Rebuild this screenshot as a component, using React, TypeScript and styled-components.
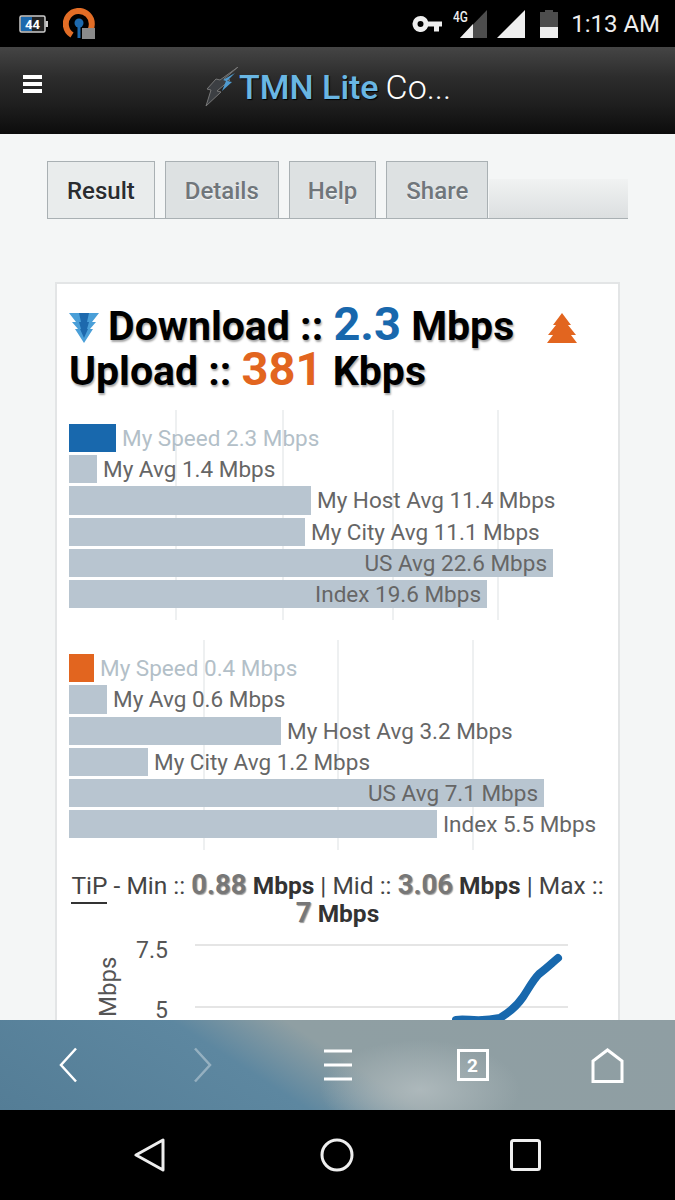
import styled, { createGlobalStyle } from 'styled-components'

const downloadRows = [
  { label: 'My Speed 2.3 Mbps', width: 47, speed: true },
  { label: 'My Avg 1.4 Mbps', width: 28 },
  { label: 'My Host Avg 11.4 Mbps', width: 242 },
  { label: 'My City Avg 11.1 Mbps', width: 236 },
  { label: 'US Avg 22.6 Mbps', width: 484, inside: true },
  { label: 'Index 19.6 Mbps', width: 418, inside: true },
]

const uploadRows = [
  { label: 'My Speed 0.4 Mbps', width: 25, speed: true },
  { label: 'My Avg 0.6 Mbps', width: 38 },
  { label: 'My Host Avg 3.2 Mbps', width: 212 },
  { label: 'My City Avg 1.2 Mbps', width: 79 },
  { label: 'US Avg 7.1 Mbps', width: 475, inside: true },
  { label: 'Index 5.5 Mbps', width: 368 },
]

type Row = { label: string; width: number; speed?: boolean; inside?: boolean }

const App = () => (
  <Screen>
    <GlobalStyle />
    <StatusBar>
      <StatusGroup>
        <svg width="30" height="20" viewBox="0 0 30 20">
          <rect x="1" y="2" width="25" height="16" rx="1.5" fill="#222" stroke="#ccc" strokeWidth="1.5" />
          <rect x="2" y="3" width="11" height="14" fill="#1d69ad" />
          <rect x="26.5" y="7" width="2.5" height="6" fill="#ccc" />
          <text x="13.5" y="15" fontFamily="Roboto" fontSize="13" fontWeight="700" fill="#fff" textAnchor="middle">44</text>
        </svg>
        <svg width="32" height="32" viewBox="0 0 32 32">
          <path d="M9 27 A13 13 0 1 1 24 26" fill="none" stroke="#e26d26" strokeWidth="6" />
          <circle cx="16" cy="15" r="4.5" fill="#1d69ad" />
          <path d="M14.5 17h3v13h-3z" fill="#1d69ad" />
          <rect x="19" y="20" width="13" height="11" fill="#8a8a8a" />
        </svg>
      </StatusGroup>
      <StatusRight>
        <KeyIcon width="30" height="18" viewBox="0 0 30 18">
          <path d="M8.5 1a8 8 0 0 1 7.6 5.5H30v5h-3v5h-5v-5h-5.900A8 8 0 1 1 8.500 1zm0 5a3 3 0 1 0 0 6 3 3 0 0 0 0-6z" fill="#eee" fillRule="evenodd" />
        </KeyIcon>
        <NetworkIcon>
          <NetworkLabel>4G</NetworkLabel>
          <svg width="28" height="28" viewBox="0 0 28 28">
            <path d="M27 0v28H0z" fill="#4d4d4d" />
            <path d="M13 14v14H0z" fill="#eee" />
          </svg>
        </NetworkIcon>
        <svg width="28" height="28" viewBox="0 0 28 28">
          <path d="M28 0v28H0z" fill="#eee" />
        </svg>
        <BatteryIcon width="18" height="28" viewBox="0 0 18 28">
          <path d="M5 0h8v2h5v26H0V2h5z" fill="#4d4d4d" />
          <path d="M0 17h18v11H0z" fill="#eee" />
        </BatteryIcon>
        <Clock>1:13 AM</Clock>
      </StatusRight>
    </StatusBar>

    <Header>
      <HeaderMenu>
        <svg width="19" height="18" viewBox="0 0 19 18">
          <path d="M0 0h19v4H0zM0 7h19v4H0zM0 14h19v4H0z" fill="#fff" />
        </svg>
      </HeaderMenu>
      <Brand>
        <svg width="34" height="40" viewBox="0 0 34 40">
          <path d="M33 0 L19 12 L25 13 L12 24 L16 25 L1 39 L6 23 L2 22 L11 12 L15 13z" fill="#3c3f43" stroke="#777" strokeWidth="1" />
          <path d="M30 6 L22 14 L27 15 L17 24 L21 14 L18 13z" fill="#4f9bd0" />
        </svg>
        <BrandName>TMN Lite</BrandName>
        <BrandRest>Co...</BrandRest>
      </Brand>
    </Header>

    <Content>
      <TabStrip>
        <Tab $active>Result</Tab>
        <Tab>Details</Tab>
        <Tab $pad={18}>Help</Tab>
        <Tab>Share</Tab>
      </TabStrip>

      <Card>
        <Heading>
          <HeadingIcon width="30" height="30" viewBox="0 0 30 30" $right={9}>
            <path d="M0 0h30l-7 9h4l-6 7h3L15 30 6 16h3L3 9h4z" fill="#4a9fd8" />
            <path d="M10 0h10l-2 9h2l-2 7h1l-4 9-4-9h1L10 9h2z" fill="#1d69ad" />
          </HeadingIcon>
          Download :: <DownloadValue>2.3</DownloadValue> Mbps
          <HeadingIcon width="30" height="30" viewBox="0 0 30 30" $left={33}>
            <path d="M15 0l9 12h-3l8 10h-5l6 8H0l6-8H1l8-10H6z" fill="#e2651f" />
          </HeadingIcon>
          <br />
          Upload :: <UploadValue>381</UploadValue> Kbps
        </Heading>

        <Chart $lines={[106, 213, 323, 428]} $top={16}>
          {downloadRows.map((row) => <ChartRow key={row.label} row={row} color="#1868ad" />)}
        </Chart>

        <Chart $lines={[134, 268, 403]} $top={20}>
          {uploadRows.map((row) => <ChartRow key={row.label} row={row} color="#e2651f" />)}
        </Chart>

        <TipLine>
          <TipName>TiP</TipName> - Min :: <TipValue>0.88</TipValue> <TipUnit>Mbps</TipUnit> | Mid :: <TipValue>3.06</TipValue> <TipUnit>Mbps</TipUnit> | Max :: <TipValue>7</TipValue> <TipUnit>Mbps</TipUnit>
        </TipLine>

        <LineChart width="563" height="110" viewBox="0 0 563 110">
          <line x1="138" y1="15" x2="511" y2="15" stroke="#ddd" strokeWidth="1.5" />
          <line x1="138" y1="77" x2="511" y2="77" stroke="#ddd" strokeWidth="1.5" />
          <text x="79" y="28" fontFamily="Roboto" fontSize="23" fill="#555">7.5</text>
          <text x="98" y="88" fontFamily="Roboto" fontSize="23" fill="#555">5</text>
          <text transform="translate(59 87) rotate(-90)" fontFamily="Roboto" fontSize="24" fill="#555">Mbps</text>
          <path d="M399 90 C410 88 420 93 443 88 C453 82 460 76 466 67 C472 58 476 50 482 44 C490 38 495 33 501 28" fill="none" stroke="#1868ad" strokeWidth="8" strokeLinecap="round" />
        </LineChart>
      </Card>
    </Content>

    <BrowserBar>
      <svg width="20" height="36" viewBox="0 0 20 36">
        <path d="M18 1.500 3 18l15 16.500" fill="none" stroke="#fff" strokeWidth="2.500" />
      </svg>
      <DimIcon width="20" height="36" viewBox="0 0 20 36">
        <path d="M2 1.500 17 18 2 34.500" fill="none" stroke="#fff" strokeWidth="2.500" />
      </DimIcon>
      <svg width="28" height="34" viewBox="0 0 28 34">
        <path d="M0 3h28M0 17h28M0 31h28" fill="none" stroke="#fff" strokeWidth="3" />
      </svg>
      <PageCount>2</PageCount>
      <svg width="33" height="35" viewBox="0 0 33 35">
        <path d="M2 33.500V13L16.500 2 31 13v20.500z" fill="none" stroke="#fff" strokeWidth="3" />
      </svg>
    </BrowserBar>

    <NavBar>
      <svg width="31" height="34" viewBox="0 0 31 34">
        <path d="M29 2v30L2 17z" fill="none" stroke="#eee" strokeWidth="3" strokeLinejoin="round" />
      </svg>
      <svg width="34" height="34" viewBox="0 0 34 34">
        <circle cx="17" cy="17" r="15" fill="none" stroke="#eee" strokeWidth="3" />
      </svg>
      <svg width="31" height="32" viewBox="0 0 31 32">
        <rect x="1.500" y="1.500" width="28" height="29" rx="2" fill="none" stroke="#eee" strokeWidth="3" />
      </svg>
    </NavBar>
  </Screen>
)

const ChartRow = ({ row, color }: { row: Row; color: string }) => (
  <RowLine>
    <Bar style={{ width: row.width }} $color={row.speed ? color : '#b8c5d0'}>
      {row.inside && <BarLabel>{row.label}</BarLabel>}
    </Bar>
    {!row.inside && <BarLabel $speed={row.speed}>{row.label}</BarLabel>}
  </RowLine>
)

const GlobalStyle = createGlobalStyle`
  html, body {
    margin: 0;
    padding: 0;
    background: #000;
  }
  body {
    font-family: Roboto, "Liberation Sans", sans-serif;
  }
`

const Screen = styled.div`
  width: 675px;
  height: 1200px;
  display: flex;
  flex-direction: column;
  overflow: hidden;
`

const StatusBar = styled.div`
  height: 47px;
  flex: none;
  background: #000;
  display: flex;
  align-items: center;
  justify-content: space-between;
  padding: 0 15px 0 19px;
`

const StatusGroup = styled.div`
  display: flex;
  align-items: center;
  gap: 14px;
`

const StatusRight = styled(StatusGroup)`
  gap: 9px;
`

const KeyIcon = styled.svg`
  margin-right: 0;
`

const BatteryIcon = styled.svg`
  margin-left: 6px;
`

const NetworkIcon = styled.div`
  position: relative;
  display: flex;
  padding-left: 9px;
`

const NetworkLabel = styled.span`
  position: absolute;
  left: 2px;
  top: -1px;
  font-size: 14px;
  font-weight: 500;
  color: #eee;
  transform: scaleX(0.85);
  transform-origin: left;
`

const Clock = styled.span`
  font-size: 24px;
  color: #eee;
  margin-left: 4px;
`

const Header = styled.header`
  height: 87px;
  flex: none;
  display: flex;
  align-items: center;
  background: linear-gradient(#454545, #2c2c2c 35%, #1f1f1f 65%, #0c0c0c);
  padding: 0 0 8px 23px;
  box-sizing: border-box;
`

const HeaderMenu = styled.div`
  display: flex;
  margin-top: -6px;
`

const Brand = styled.div`
  display: flex;
  align-items: center;
  margin-left: 163px;
`

const BrandName = styled.span`
  font-size: 34px;
  font-weight: 500;
  color: #69b6e3;
  text-shadow: 1px 1px 1px #000;
`

const BrandRest = styled.span`
  font-size: 34px;
  font-weight: 300;
  color: #fff;
  margin-left: 7px;
`

const Content = styled.main`
  flex: 1;
  min-height: 0;
  background: #f4f6f6;
  padding: 27px 47px 0;
  overflow: hidden;
`

const TabStrip = styled.nav`
  display: flex;
  gap: 10px;
  height: 58px;
  width: 581px;
  box-sizing: border-box;
  border-bottom: 1px solid #a9b0b3;
  background: linear-gradient(#f0f2f2, #dcdfe0) no-repeat right bottom / 139px 39px;
`

const Tab = styled.div<{ $active?: boolean; $pad?: number }>`
  display: flex;
  align-items: center;
  justify-content: center;
  padding: 2px ${(props) => props.$pad || 19}px 0;
  border: 1px solid #a9b0b3;
  border-bottom: none;
  background: ${(props) => (props.$active ? '#e9ecec' : '#dde1e2')};
  color: ${(props) => (props.$active ? '#2a2d30' : '#70767b')};
  font-size: 24px;
  font-weight: 500;
  text-shadow: 0 1px 1px rgba(255, 255, 255, 0.8);
`

const Card = styled.section`
  margin: 63px 0 0 8px;
  width: 565px;
  height: 780px;
  box-sizing: border-box;
  background: #fff;
  border: 2px solid #e3e5e6;
  padding: 20px 12px 0;
`

const Heading = styled.h1`
  margin: 0;
  font-size: 41px;
  line-height: 45px;
  font-weight: 700;
  color: #000;
  white-space: nowrap;
  text-shadow: 1px 2px 2px rgba(0, 0, 0, 0.35);
`

const HeadingIcon = styled.svg<{ $left?: number; $right?: number }>`
  vertical-align: -3px;
  margin-left: ${(props) => props.$left || 0}px;
  margin-right: ${(props) => props.$right || 0}px;
`

const DownloadValue = styled.span`
  font-size: 47px;
  line-height: 0;
  color: #1868ad;
  text-shadow: none;
`

const UploadValue = styled.span`
  font-size: 47px;
  line-height: 0;
  color: #e2651f;
  text-shadow: none;
`

const Chart = styled.div<{ $lines: number[]; $top: number }>`
  margin-top: ${(props) => props.$top}px;
  padding: 14px 0 12px;
  display: flex;
  flex-direction: column;
  gap: 3px;
  background-image: ${(props) => props.$lines.map(() => 'linear-gradient(#eef0f1, #eef0f1)').join(', ')};
  background-size: 2px 100%;
  background-repeat: no-repeat;
  background-position: ${(props) => props.$lines.map((x) => `${x}px 0`).join(', ')};
`

const RowLine = styled.div`
  display: flex;
  align-items: center;
  height: 28.200px;
`

const Bar = styled.div<{ $color: string }>`
  height: 100%;
  flex: none;
  background: ${(props) => props.$color};
  display: flex;
  justify-content: flex-end;
  padding-right: 6px;
  box-sizing: border-box;
  align-items: center;
`

const BarLabel = styled.span<{ $speed?: boolean }>`
  font-size: 22.500px;
  font-weight: 400;
  color: ${(props) => (props.$speed ? '#b3bfc8' : '#666')};
  margin-left: 6px;
  white-space: nowrap;
`

const TipLine = styled.p`
  margin: 22px 0 2px;
  text-align: center;
  font-size: 24.500px;
  line-height: 28px;
  color: #444;
`

const TipName = styled.span`
  border-bottom: 2px solid #333;
  padding-bottom: 2px;
`

const TipValue = styled.b`
  font-size: 27.500px;
  line-height: 0;
  color: #777;
  text-shadow: 1px 1px 1px rgba(0, 0, 0, 0.4);
`

const TipUnit = styled.b`
  color: #333;
`

const LineChart = styled.svg`
  display: block;
  margin: 0 -12px;
`

const BrowserBar = styled.div`
  height: 90px;
  flex: none;
  display: grid;
  grid-template-columns: repeat(5, 135px);
  justify-items: center;
  align-items: center;
  background:
    radial-gradient(ellipse 100px 50px at 420px 70px, #adb8bb, rgba(173, 184, 187, 0)),
    linear-gradient(33deg, #547d96 0, #5d87a0 38%, #8f9fa3 52%, #8f9ea3 100%);
`

const DimIcon = styled.svg`
  opacity: 0.35;
`

const PageCount = styled.div`
  width: 32px;
  height: 32px;
  box-sizing: border-box;
  border: 3px solid #fff;
  color: #fff;
  font-size: 19px;
  font-weight: 700;
  display: flex;
  align-items: center;
  justify-content: center;
`

const NavBar = styled.div`
  height: 90px;
  flex: none;
  background: #000;
  display: grid;
  grid-template-columns: repeat(3, 1fr);
  justify-items: center;
  align-items: center;
  padding: 0 56px;
`

export default App
